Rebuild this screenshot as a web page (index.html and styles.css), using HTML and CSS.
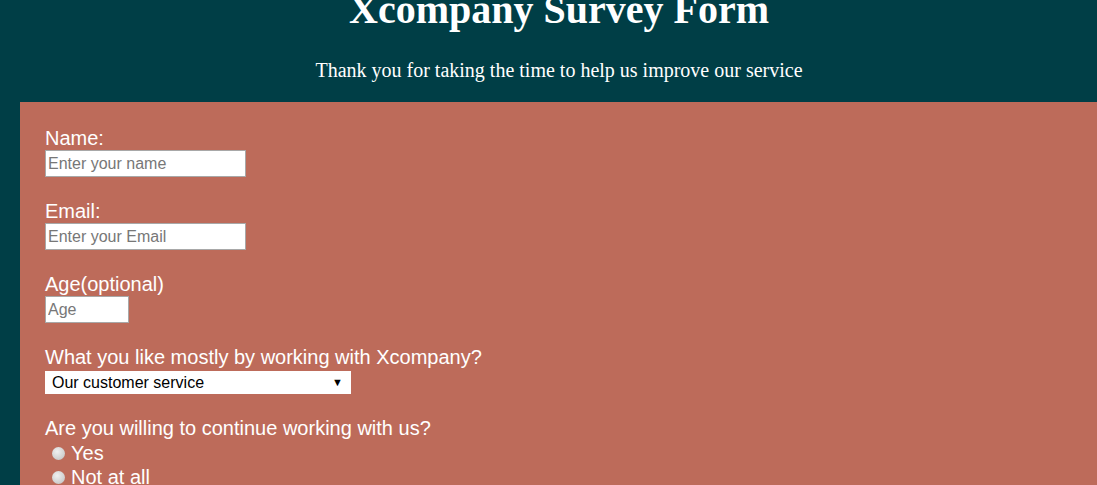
FILE: index.html
```html
<!DOCTYPE html>
<html lang="en">
<head>
  <meta charset="UTF-8" />
  <title>Xcompany Survey Form</title>
  <link rel="stylesheet" href="styles.css">
</head>
<body>
  <header class="header">
    <h1 id="title">Xcompany Survey Form</h1>
    <p id="description">Thank you for taking the time to help us improve our service</p>
  </header>

  <form id="survey-form" class="survey-form">
    <div class="field">
      <label for="name">Name:</label>
      <input type="text" id="name" class="text-input" placeholder="Enter your name" />
    </div>
    <div class="field">
      <label for="email">Email:</label>
      <input type="email" id="email" class="text-input" placeholder="Enter your Email" />
    </div>
    <div class="field">
      <label for="number">Age(optional)</label>
      <input type="number" id="number" class="text-input age-input" placeholder="Age" />
    </div>
    <div class="field field-select">
      <label for="dropdown">What you like mostly by working with Xcompany?</label>
      <div class="select-wrap">
        <select id="dropdown" class="dropdown">
          <option>Our customer service</option>
          <option>Our products</option>
          <option>Our prices</option>
        </select>
      </div>
    </div>
    <div class="field">
      <label>Are you willing to continue working with us?</label>
      <div class="radios">
        <label class="radio"><input type="radio" name="continue" value="yes" /><span>Yes</span></label>
        <label class="radio"><input type="radio" name="continue" value="no" /><span>Not at all</span></label>
      </div>
    </div>
  </form>
</body>
</html>
```

FILE: styles.css
```css
body {
  margin: 0;
  background: #003e46;
  color: white;
  font-family: "Liberation Serif", "Times New Roman", serif;
}
.header {
  padding-left: 21px;
  text-align: center;
}
h1 {
  margin: -14px 0 0;
  font-size: 40px;
}
#description {
  margin: 26px 0 20px;
  font-size: 20px;
}
.survey-form {
  margin-left: 20px;
  padding: 25px;
  min-height: 600px;
  background: #bd6b5a;
  font-family: "Liberation Sans", Arial, sans-serif;
}
.field {
  margin-bottom: 23px;
}
.field label {
  display: block;
  font-size: 20px;
  line-height: 23px;
}
.text-input {
  box-sizing: border-box;
  width: 201px;
  height: 27px;
  margin: 0;
  padding: 1px 2px;
  border: 1px solid #a8a8a8;
  background: white;
  font-family: "Liberation Sans", Arial, sans-serif;
  font-size: 16px;
}
.text-input::placeholder {
  color: #777;
}
.age-input {
  width: 84px;
}
.select-wrap {
  position: relative;
  width: 306px;
  margin-top: 2px;
}
.select-wrap::after {
  content: "▼";
  position: absolute;
  top: 5px;
  right: 8px;
  color: black;
  font-size: 11px;
  pointer-events: none;
}
.dropdown {
  display: block;
  box-sizing: border-box;
  width: 306px;
  height: 23px;
  padding: 0 7px;
  border: none;
  border-radius: 0;
  appearance: none;
  background: white;
  color: black;
  font-family: "Liberation Sans", Arial, sans-serif;
  font-size: 16px;
}
.radios {
  padding-top: 1px;
}
.field .radio {
  display: flex;
  align-items: center;
  height: 24px;
}
.radio input {
  appearance: none;
  width: 13px;
  height: 13px;
  margin: 0 6px 0 7px;
  border-radius: 50%;
  background: radial-gradient(circle at 40% 35%, #f0f0f0, #d2d2d2 60%, #bdbdbd);
}
```
